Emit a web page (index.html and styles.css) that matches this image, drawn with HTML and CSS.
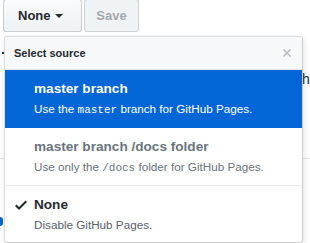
FILE: index.html
```html
<!DOCTYPE html>
<html>
<head>
<meta charset="utf-8">
<link rel="stylesheet" href="styles.css">
</head>
<body>
<div class="page">
  <div class="toolbar">
    <button class="btn">None <span class="caret"></span></button>
    <button class="btn btn-disabled" disabled>Save</button>
  </div>
  <div class="bg-text"><span class="bg-dot"></span><span class="bg-h">h</span></div>
  <div class="bg-rule"></div>
  <div class="bg-link"></div>

  <div class="menu">
    <div class="menu-header">
      <span class="menu-title">Select source</span>
      <svg class="close" width="10" height="10" viewBox="0 0 10 10"><path d="M1.5 1.5l7 7M8.5 1.5l-7 7" stroke="#b9bdc1" stroke-width="1.6" fill="none"/></svg>
    </div>
    <div class="item item-active">
      <div class="item-heading">master branch</div>
      <div class="item-desc">Use the <code>master</code> branch for GitHub Pages.</div>
    </div>
    <div class="item item-disabled">
      <div class="item-heading">master branch /docs folder</div>
      <div class="item-desc">Use only the <code>/docs</code> folder for GitHub Pages.</div>
    </div>
    <div class="item item-selected">
      <svg class="check" width="12" height="16" viewBox="0 0 12 16"><path d="M12 5l-8 8-4-4 1.5-1.5L4 10l6.5-6.5L12 5z" fill="#24292e"/></svg>
      <div class="item-heading">None</div>
      <div class="item-desc">Disable GitHub Pages.</div>
    </div>
  </div>
</div>
</body>
</html>
```

FILE: styles.css
```css
html, body {
  margin: 0;
  padding: 0;
  background: #fff;
}
body {
  width: 310px;
  height: 243px;
  overflow: hidden;
  font-family: "Liberation Sans", Arial, sans-serif;
  color: #24292e;
}
.page {
  position: relative;
  display: flow-root;
  height: 243px;
}
.toolbar {
  display: flex;
  gap: 2px;
  margin-top: -1px;
  padding-left: 3px;
}
.btn {
  display: flex;
  align-items: center;
  height: 33px;
  padding: 0 13px;
  font-family: "Liberation Sans", Arial, sans-serif;
  font-size: 13px;
  font-weight: 700;
  color: #24292e;
  background: linear-gradient(#fafbfc, #eff3f6 90%);
  border: 1px solid rgba(27,31,35,.2);
  border-radius: 3px;
}
.btn:first-child {
  width: 79px;
  padding-left: 14px;
}
.caret {
  display: inline-block;
  margin-left: 4px;
  margin-top: 1px;
  border-top: 4px solid #24292e;
  border-left: 4px solid transparent;
  border-right: 4px solid transparent;
}
.btn-disabled {
  width: 55px;
  justify-content: center;
  color: rgba(36,41,46,.4);
  background: #eff3f6;
  border-color: rgba(27,31,35,.15);
}
.bg-text {
  display: flex;
  align-items: center;
  margin-top: 38px;
  height: 18px;
  font-size: 14px;
  line-height: 18px;
}
.bg-dot {
  width: 2px;
  height: 2px;
  margin-left: 2px;
  background: #24292e;
  align-self: flex-start;
  margin-top: -18px;
}
.bg-h {
  margin-left: 298px;
}
.bg-rule {
  margin-top: 70px;
  border-top: 1px solid #e1e4e8;
}
.bg-link {
  margin-top: 58px;
  width: 3px;
  height: 9px;
  border-radius: 0 4px 4px 0;
  background: #0366d6;
}
.menu {
  position: absolute;
  top: 36px;
  left: 4px;
  width: 297px;
  background: #fff;
  border: 1px solid rgba(27,31,35,.15);
  border-right-color: rgba(27,31,35,.22);
  border-bottom-color: rgba(27,31,35,.22);
  border-radius: 3px;
  box-shadow: 1px 2px 6px rgba(27,31,35,.12);
  overflow: hidden;
}
.menu-header {
  display: flex;
  align-items: center;
  justify-content: space-between;
  padding: 8px 10px 8px 9px;
  background: #f6f8fa;
  border-bottom: 1px solid #e1e4e8;
}
.menu-title {
  font-size: 11px;
  font-weight: 700;
  line-height: 16px;
}
.close {
  display: block;
}
.item {
  position: relative;
  padding: 9px 16px 7px 29px;
  border-bottom: 1px solid #eaecef;
}
.item:last-child {
  border-bottom: none;
}
.item-heading {
  font-size: 13.6px;
  font-weight: 700;
  line-height: 20px;
}
.item-desc {
  font-size: 11.7px;
  line-height: 20px;
  color: #586069;
}
code {
  font-family: "Liberation Mono", monospace;
  font-size: 11px;
}
.item-active {
  background: #0366d6;
  border-bottom-color: #0366d6;
}
.item-active .item-heading,
.item-active .item-desc {
  color: #fff;
}
.item-disabled .item-heading {
  color: #6a737d;
}
.item-disabled .item-desc {
  color: #6a737d;
}
.check {
  position: absolute;
  left: 10px;
  top: 11px;
}
```
